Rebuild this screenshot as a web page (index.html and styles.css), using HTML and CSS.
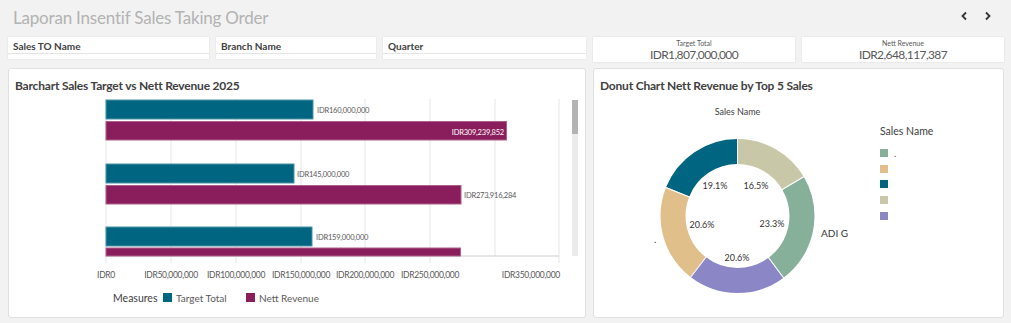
FILE: index.html
```html
<!DOCTYPE html>
<html>
<head>
    <title>Laporan Insentif Sales Taking Order</title>
    <link rel="stylesheet" href="styles.css">
</head>
<body>
    <div class="header">
        <h1 class="title">Laporan Insentif Sales Taking Order</h1>
        <div class="nav">
            <svg width="8" height="12" viewBox="0 0 8 12"><path d="M6 2.5 L2.5 6 L6 9.5" fill="none" stroke="#333" stroke-width="1.8"/></svg>
            <svg width="8" height="12" viewBox="0 0 8 12"><path d="M2 2.5 L5.5 6 L2 9.5" fill="none" stroke="#333" stroke-width="1.8"/></svg>
        </div>
    </div>

    <div class="toolbar">
        <div class="filter f1"><span>Sales TO Name</span></div>
        <div class="filter f2"><span>Branch Name</span></div>
        <div class="filter f3"><span>Quarter</span></div>
        <div class="kpi">
            <div class="kpi-label">Target Total</div>
            <div class="kpi-value">IDR1,807,000,000</div>
        </div>
        <div class="kpi">
            <div class="kpi-label">Nett Revenue</div>
            <div class="kpi-value">IDR2,648,117,387</div>
        </div>
    </div>

    <div class="panels">
        <div class="panel bar-panel">
            <div class="panel-title">Barchart Sales Target vs Nett Revenue 2025</div>
            <!-- svg origin = page (9, 95) -->
            <svg class="chart" width="576" height="221" viewBox="0 0 576 221">
                <g class="grid">
                    <line x1="97" y1="4" x2="97" y2="168"/>
                    <line x1="162" y1="4" x2="162" y2="168"/>
                    <line x1="227" y1="4" x2="227" y2="168"/>
                    <line x1="292" y1="4" x2="292" y2="168"/>
                    <line x1="356" y1="4" x2="356" y2="168"/>
                    <line x1="421" y1="4" x2="421" y2="168"/>
                    <line x1="486" y1="4" x2="486" y2="161"/>
                    <line x1="550" y1="4" x2="550" y2="168"/>
                </g>
                <line class="axis" x1="97" y1="161" x2="550" y2="161"/>
                <g class="bars">
                    <rect class="target" x="97" y="5" width="207" height="19"/>
                    <rect class="nett" x="97" y="26.5" width="400.5" height="18.5"/>
                    <rect class="target" x="97" y="69" width="188" height="19"/>
                    <rect class="nett" x="97" y="90.5" width="355" height="18.5"/>
                    <rect class="target" x="97" y="132" width="206" height="19"/>
                    <rect class="nett" x="97" y="153" width="354.5" height="8"/>
                </g>
                <g class="val">
                    <text x="308" y="18">IDR160,000,000</text>
                    <text class="in" x="495" y="39.5" text-anchor="end">IDR309,239,852</text>
                    <text x="288" y="82">IDR145,000,000</text>
                    <text x="455" y="103">IDR273,916,284</text>
                    <text x="307" y="145">IDR159,000,000</text>
                </g>
                <g class="ticks">
                    <text x="97" y="183" text-anchor="middle">IDR0</text>
                    <text x="162" y="183" text-anchor="middle">IDR50,000,000</text>
                    <text x="227" y="183" text-anchor="middle">IDR100,000,000</text>
                    <text x="292" y="183" text-anchor="middle">IDR150,000,000</text>
                    <text x="356" y="183" text-anchor="middle">IDR200,000,000</text>
                    <text x="421" y="183" text-anchor="middle">IDR250,000,000</text>
                    <text x="551" y="183" text-anchor="end">IDR350,000,000</text>
                </g>
                <rect class="track" x="563" y="5" width="6" height="156"/>
                <rect class="thumb" x="563" y="5" width="6" height="34"/>
                <g class="legend">
                    <text class="legend-title" x="104" y="207">Measures</text>
                    <rect x="154" y="198" width="9" height="9" fill="#006580"/>
                    <text x="167" y="207">Target Total</text>
                    <rect x="237" y="198" width="9" height="9" fill="#8a1e5c"/>
                    <text x="250" y="207">Nett Revenue</text>
                </g>
            </svg>
        </div>

        <div class="panel donut-panel">
            <div class="panel-title">Donut Chart Nett Revenue by Top 5 Sales</div>
            <!-- svg origin = page (594, 95) -->
            <svg class="chart" width="409" height="221" viewBox="0 0 409 221">
                <text class="dim-title" x="143.5" y="20" text-anchor="middle">Sales Name</text>
                <g transform="translate(143.5 121) rotate(-90)" fill="none" stroke-width="25">
                    <circle r="64.5" stroke="#c8c7a8" stroke-dasharray="66.9 405.3" stroke-dashoffset="0"/>
                    <circle r="64.5" stroke="#87b09b" stroke-dasharray="94.4 405.3" stroke-dashoffset="-66.9"/>
                    <circle r="64.5" stroke="#8b87c7" stroke-dasharray="83.5 405.3" stroke-dashoffset="-161.3"/>
                    <circle r="64.5" stroke="#e1bf8b" stroke-dasharray="83.5 405.3" stroke-dashoffset="-244.8"/>
                    <circle r="64.5" stroke="#006580" stroke-dasharray="77.0 405.3" stroke-dashoffset="-328.3"/>
                </g>
                <g transform="translate(143.5 121)" stroke="#fff" stroke-width="1">
                    <line x1="0" y1="-51" x2="0" y2="-78"/>
                    <line x1="0" y1="-51" x2="0" y2="-78" transform="rotate(59.4)"/>
                    <line x1="0" y1="-51" x2="0" y2="-78" transform="rotate(143.3)"/>
                    <line x1="0" y1="-51" x2="0" y2="-78" transform="rotate(217.4)"/>
                    <line x1="0" y1="-51" x2="0" y2="-78" transform="rotate(291.6)"/>
                </g>
                <g class="pct" text-anchor="middle">
                    <text x="121" y="94">19.1%</text>
                    <text x="162" y="94">16.5%</text>
                    <text x="178" y="132">23.3%</text>
                    <text x="108" y="133">20.6%</text>
                    <text x="143" y="166">20.6%</text>
                </g>
                <text class="outer" x="227" y="142">ADI G</text>
                <text class="outer" x="60" y="148">.</text>
                <g class="legend">
                    <text class="legend-title" x="286" y="40">Sales Name</text>
                    <rect x="286" y="54" width="8" height="8" fill="#87b09b"/>
                    <text x="300" y="62">.</text>
                    <rect x="286" y="70" width="8" height="8" fill="#e1bf8b"/>
                    <rect x="286" y="85" width="8" height="8" fill="#006580"/>
                    <rect x="286" y="101" width="8" height="8" fill="#c8c7a8"/>
                    <rect x="286" y="117" width="8" height="8" fill="#8b87c7"/>
                </g>
            </svg>
        </div>
    </div>
</body>
</html>
```

FILE: styles.css
```css
body {
    margin: 0;
    background-color: #f2f2f2;
    font-family: Lato, "Noto Sans", sans-serif;
    color: #404040;
}

.header {
    display: flex;
    justify-content: space-between;
    align-items: center;
    height: 35px;
    padding: 0 19px 0 13px;
    box-sizing: border-box;
}

.title {
    margin: 0;
    font-size: 17px;
    letter-spacing: -0.2px;
    font-weight: normal;
    color: #b3b3b3;
}

.nav {
    display: flex;
    gap: 16px;
    margin-top: -4px;
}

.toolbar {
    display: flex;
    align-items: flex-start;
    gap: 7px;
    height: 25px;
    padding: 2px 7px 0 8px;
}

.filter {
    height: 22px;
    background-color: #fff;
    box-sizing: border-box;
    border-bottom: 4px solid #fff;
    box-shadow: 0 0 1px rgba(0, 0, 0, 0.15);
}

.filter span {
    display: block;
    height: 17px;
    padding: 3px 0 0 5px;
    box-sizing: border-box;
    border-bottom: 1px solid #e4e4e4;
    font-size: 10px;
    font-weight: bold;
    color: #404040;
}

.f1 { width: 201px; }
.f2 { width: 160px; }
.f3 { width: 203px; }

.kpi {
    width: 202px;
    height: 25px;
    background-color: #fff;
    box-shadow: 0 0 1px rgba(0, 0, 0, 0.2);
    text-align: center;
    color: #595959;
}

.kpi-label {
    font-size: 7px;
    padding-top: 2px;
    line-height: 9px;
}

.kpi-value {
    font-size: 12px;
    letter-spacing: -0.6px;
    line-height: 14px;
}

.panels {
    display: flex;
    gap: 7px;
    padding: 6px 7px 0 8px;
}

.panel {
    height: 250px;
    background-color: #fff;
    border: 1px solid #e0e0e0;
    border-radius: 3px;
    box-sizing: border-box;
    overflow: hidden;
}

.bar-panel { width: 578px; }
.donut-panel { width: 411px; }

.panel-title {
    height: 26px;
    padding: 9px 0 0 6px;
    box-sizing: border-box;
    font-size: 12px;
    letter-spacing: -0.2px;
    font-weight: bold;
    color: #404040;
}

.chart {
    display: block;
    font-family: Lato, "Noto Sans", sans-serif;
}

.grid line {
    stroke: #e6e6e6;
    stroke-width: 1;
}

.axis {
    stroke: #cccccc;
    stroke-width: 1;
}

.bars rect {
    stroke-width: 1;
}

.target {
    fill: #006580;
    stroke: #4d93a6;
}

.nett {
    fill: #8a1e5c;
    stroke: #ad6189;
}

.val text {
    font-size: 7.5px;
    letter-spacing: -0.2px;
    fill: #595959;
}

.val text.in {
    fill: #fff;
}

.ticks text {
    font-size: 8.5px;
    letter-spacing: -0.3px;
    fill: #595959;
}

.track { fill: #ebebeb; }
.thumb { fill: #b3b3b3; }

.legend text {
    font-size: 10px;
    fill: #595959;
}

.legend .legend-title {
    font-size: 10.5px;
    fill: #404040;
}

.dim-title {
    font-size: 9px;
    fill: #404040;
}

.pct text {
    font-size: 9px;
    fill: #333;
}

.outer {
    font-size: 10px;
    fill: #333;
}
```
